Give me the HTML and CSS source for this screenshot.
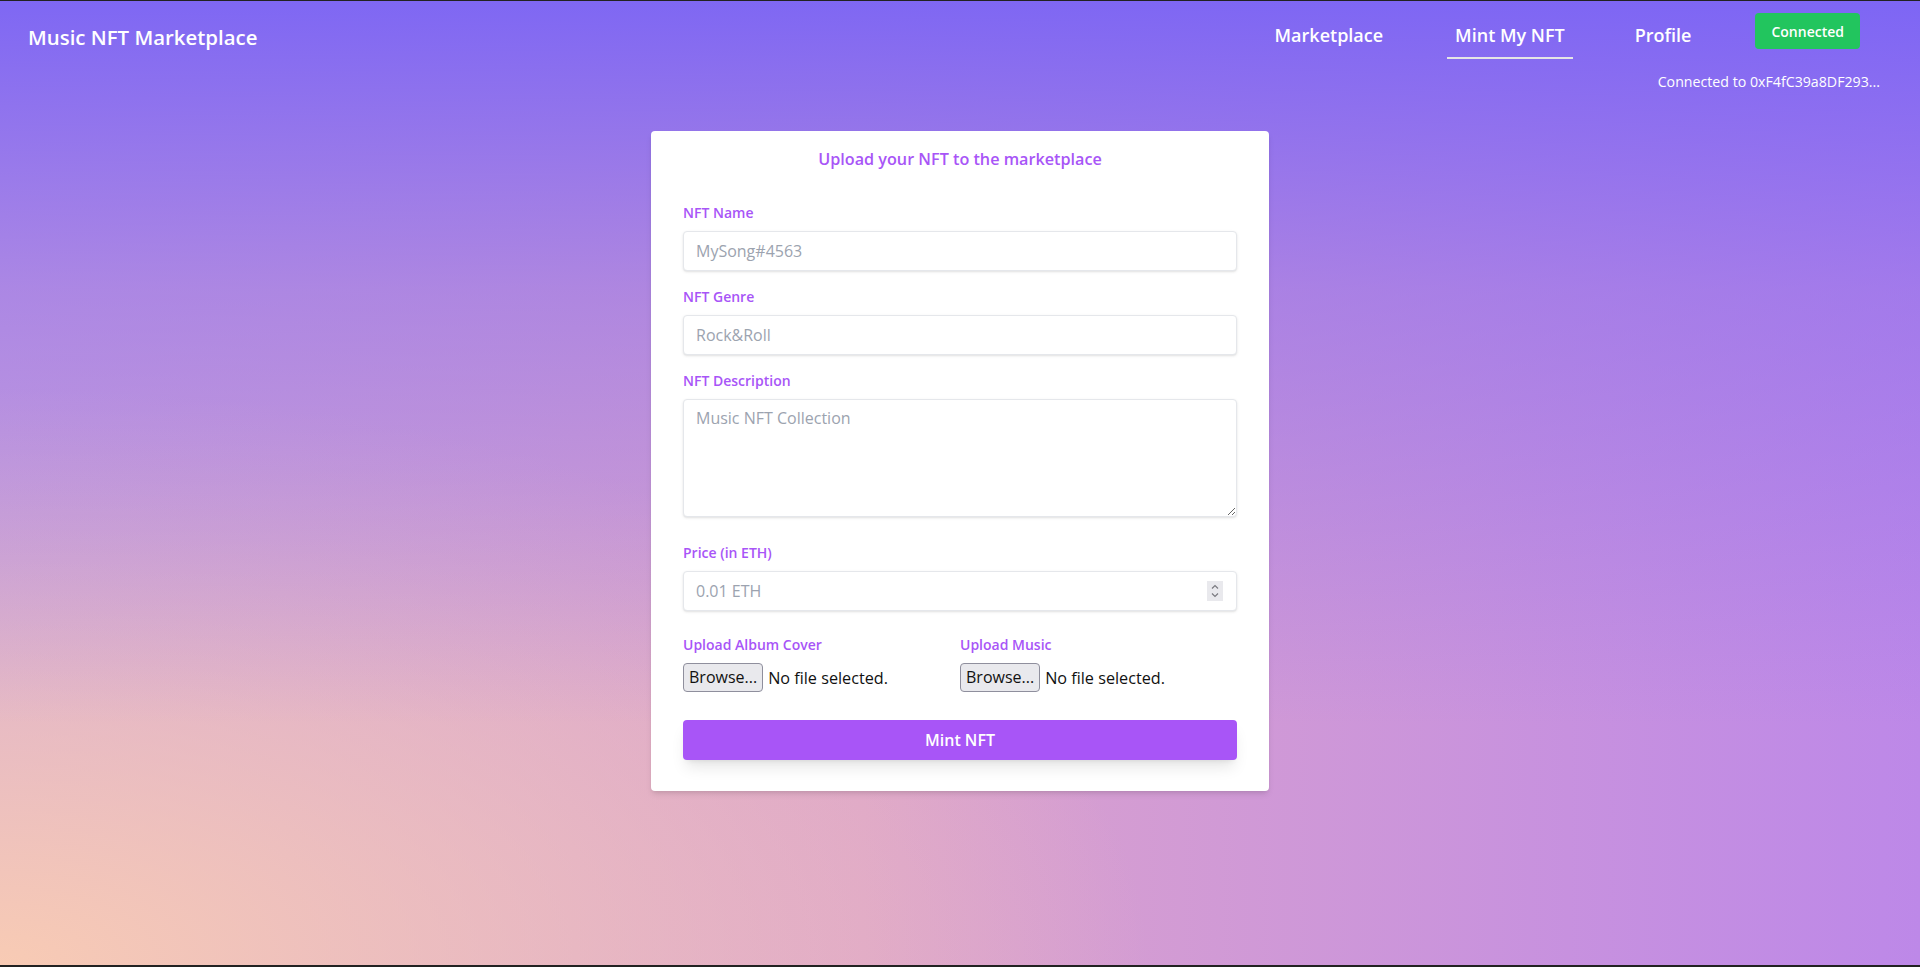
FILE: index.html
```html
<!DOCTYPE html>
<html lang="en">
<head>
    <meta charset="UTF-8">
    <meta name="viewport" content="width=device-width, initial-scale=1.0">
    <title>Music NFT Marketplace</title>
    <link rel="stylesheet" href="styles.css">
</head>
<body>
    <div class="page">
        <!-- Navbar -->
        <nav class="navbar">
            <div class="brand">Music NFT Marketplace</div>
            <ul class="nav-links">
                <li class="first"><a href="#">Marketplace</a></li>
                <li class="active"><a href="#">Mint My NFT</a></li>
                <li><a href="#">Profile</a></li>
                <li class="btn-item"><button class="connect-btn" type="button">Connected</button></li>
            </ul>
        </nav>
        <div class="wallet">Connected to 0xF4fC39a8DF293...</div>

        <!-- Form upload -->
        <div class="form-wrap">
            <form class="mint-form" id="nftForm">
                <h3>Upload your NFT to the marketplace</h3>

                <div class="field">
                    <label for="name">NFT Name</label>
                    <input type="text" id="name" placeholder="MySong#4563">
                </div>

                <div class="field">
                    <label for="genre">NFT Genre</label>
                    <input type="text" id="genre" placeholder="Rock&amp;Roll">
                </div>

                <div class="field field-desc">
                    <label for="description">NFT Description</label>
                    <textarea id="description" placeholder="Music NFT Collection"></textarea>
                </div>

                <div class="field field-lg">
                    <label for="price">Price (in ETH)</label>
                    <div class="number-box">
                        <input type="text" id="price" placeholder="0.01 ETH">
                        <span class="spinner">
                            <svg width="16" height="20" viewBox="0 0 16 20">
                                <path d="M5 7.5 L8 4.5 L11 7.5" fill="none" stroke="#7a7a80" stroke-width="1.2"/>
                                <path d="M5 12.5 L8 15.5 L11 12.5" fill="none" stroke="#7a7a80" stroke-width="1.2"/>
                            </svg>
                        </span>
                    </div>
                </div>

                <div class="uploads">
                    <div>
                        <label>Upload Album Cover</label>
                        <div class="file-row">
                            <button type="button" class="browse">Browse...</button>
                            <span>No file selected.</span>
                        </div>
                    </div>
                    <div>
                        <label>Upload Music</label>
                        <div class="file-row">
                            <button type="button" class="browse">Browse...</button>
                            <span>No file selected.</span>
                        </div>
                    </div>
                </div>

                <button type="submit" class="mint-btn">Mint NFT</button>
            </form>
        </div>
    </div>
</body>
</html>
```

FILE: styles.css
```css
* {
    box-sizing: border-box;
}
html, body {
    margin: 0;
    padding: 0;
}
body {
    font-family: "Open Sans", "Noto Sans", sans-serif;
    background-color: #222;
}
.page {
    height: 967px;
    overflow: hidden;
    border-top: 1px solid #222;
    border-bottom: 2px solid #222;
    background:
        linear-gradient(180deg, rgba(122, 100, 245, 0.95) 0%, rgba(140, 110, 238, 0.55) 30%, rgba(170, 130, 230, 0) 75%),
        radial-gradient(ellipse 60% 60% at 0% 100%, rgba(248, 203, 180, 1) 0%, rgba(248, 203, 180, 0) 100%),
        linear-gradient(90deg, #d2a6d8 0%, #dba3cc 45%, #bd88e8 100%);
}

/* navbar */
.navbar {
    display: flex;
    justify-content: space-between;
    align-items: flex-start;
    padding: 12px 20px 12px 0;
    color: #fff;
}
.brand {
    font-size: 20.4px;
    line-height: 28px;
    font-weight: 600;
    padding: 10px 0 0 28px;
}
.nav-links {
    list-style: none;
    margin: 0 40px 0 0;
    padding: 0;
    display: flex;
    align-items: flex-start;
    gap: 54px;
    font-size: 18px;
    line-height: 28px;
    font-weight: 600;
}
.nav-links li {
    padding: 8px;
    border-bottom: 2px solid transparent;
}
.nav-links li.first {
    margin-right: 2px;
}
.nav-links li.active {
    border-bottom-color: #e5e5e5;
}
.nav-links li.btn-item {
    padding: 0;
    border: none;
    margin-left: 2px;
}
.nav-links a {
    color: #fff;
    text-decoration: none;
}
.connect-btn {
    background-color: #22c55e;
    color: #fff;
    border: none;
    border-radius: 4px;
    padding: 9px 16px 7px;
    font-family: inherit;
    font-size: 14px;
    line-height: 20px;
    font-weight: 600;
    cursor: pointer;
}
.wallet {
    text-align: right;
    margin-right: 40px;
    padding-top: 1px;
    color: #fff;
    font-size: 14.2px;
    line-height: 20px;
}

/* form */
.form-wrap {
    display: flex;
    justify-content: center;
    margin-top: 39px;
}
.mint-form {
    width: 618px;
    background-color: #fff;
    border-radius: 4px;
    padding: 16px 32px 31px;
    box-shadow: 0 4px 6px -1px rgba(0, 0, 0, 0.1), 0 2px 4px -2px rgba(0, 0, 0, 0.1);
}
.mint-form h3 {
    margin: 0 0 32px;
    text-align: center;
    color: #a855f7;
    font-size: 16.2px;
    line-height: 24px;
    font-weight: 600;
}
.field {
    margin-bottom: 16px;
}
.field-desc {
    margin-bottom: 26px;
}
.field-lg {
    margin-bottom: 24px;
}
label {
    display: block;
    color: #a855f7;
    font-size: 14px;
    line-height: 20px;
    font-weight: 600;
    margin-bottom: 8px;
}
input[type="text"], textarea {
    display: block;
    width: 100%;
    padding: 8px 12px;
    border: 1px solid #e5e7eb;
    border-radius: 4px;
    font-family: inherit;
    font-size: 16px;
    line-height: 22px;
    color: #374151;
    background-color: #fff;
    box-shadow: 0 1px 3px 0 rgba(0, 0, 0, 0.1), 0 1px 2px -1px rgba(0, 0, 0, 0.1);
    outline: none;
}
textarea {
    height: 118px;
    padding-top: 7px;
    resize: vertical;
}
input::placeholder, textarea::placeholder {
    color: #9ca3af;
}
.number-box {
    position: relative;
}
.spinner {
    position: absolute;
    right: 14px;
    top: 10px;
    width: 16px;
    height: 20px;
    background-color: #e9e9ed;
    display: flex;
}
.uploads {
    display: grid;
    grid-template-columns: 1fr 1fr;
}
.file-row {
    display: flex;
    align-items: center;
    font-size: 16.2px;
    line-height: 24px;
    color: #111;
}
.browse {
    background-color: #e9e9ed;
    border: 1px solid #8f8f9d;
    border-radius: 4px;
    padding: 1px 5px;
    margin-right: 5px;
    font-family: inherit;
    font-size: 16px;
    line-height: 25px;
    color: #111;
}
.mint-btn {
    display: block;
    width: 100%;
    margin-top: 28px;
    padding: 8px;
    background-color: #a855f7;
    color: #fff;
    border: none;
    border-radius: 4px;
    font-family: inherit;
    font-size: 16px;
    line-height: 24px;
    font-weight: 600;
    box-shadow: 0 10px 15px -3px rgba(0, 0, 0, 0.1), 0 4px 6px -4px rgba(0, 0, 0, 0.1);
    cursor: pointer;
}
```
